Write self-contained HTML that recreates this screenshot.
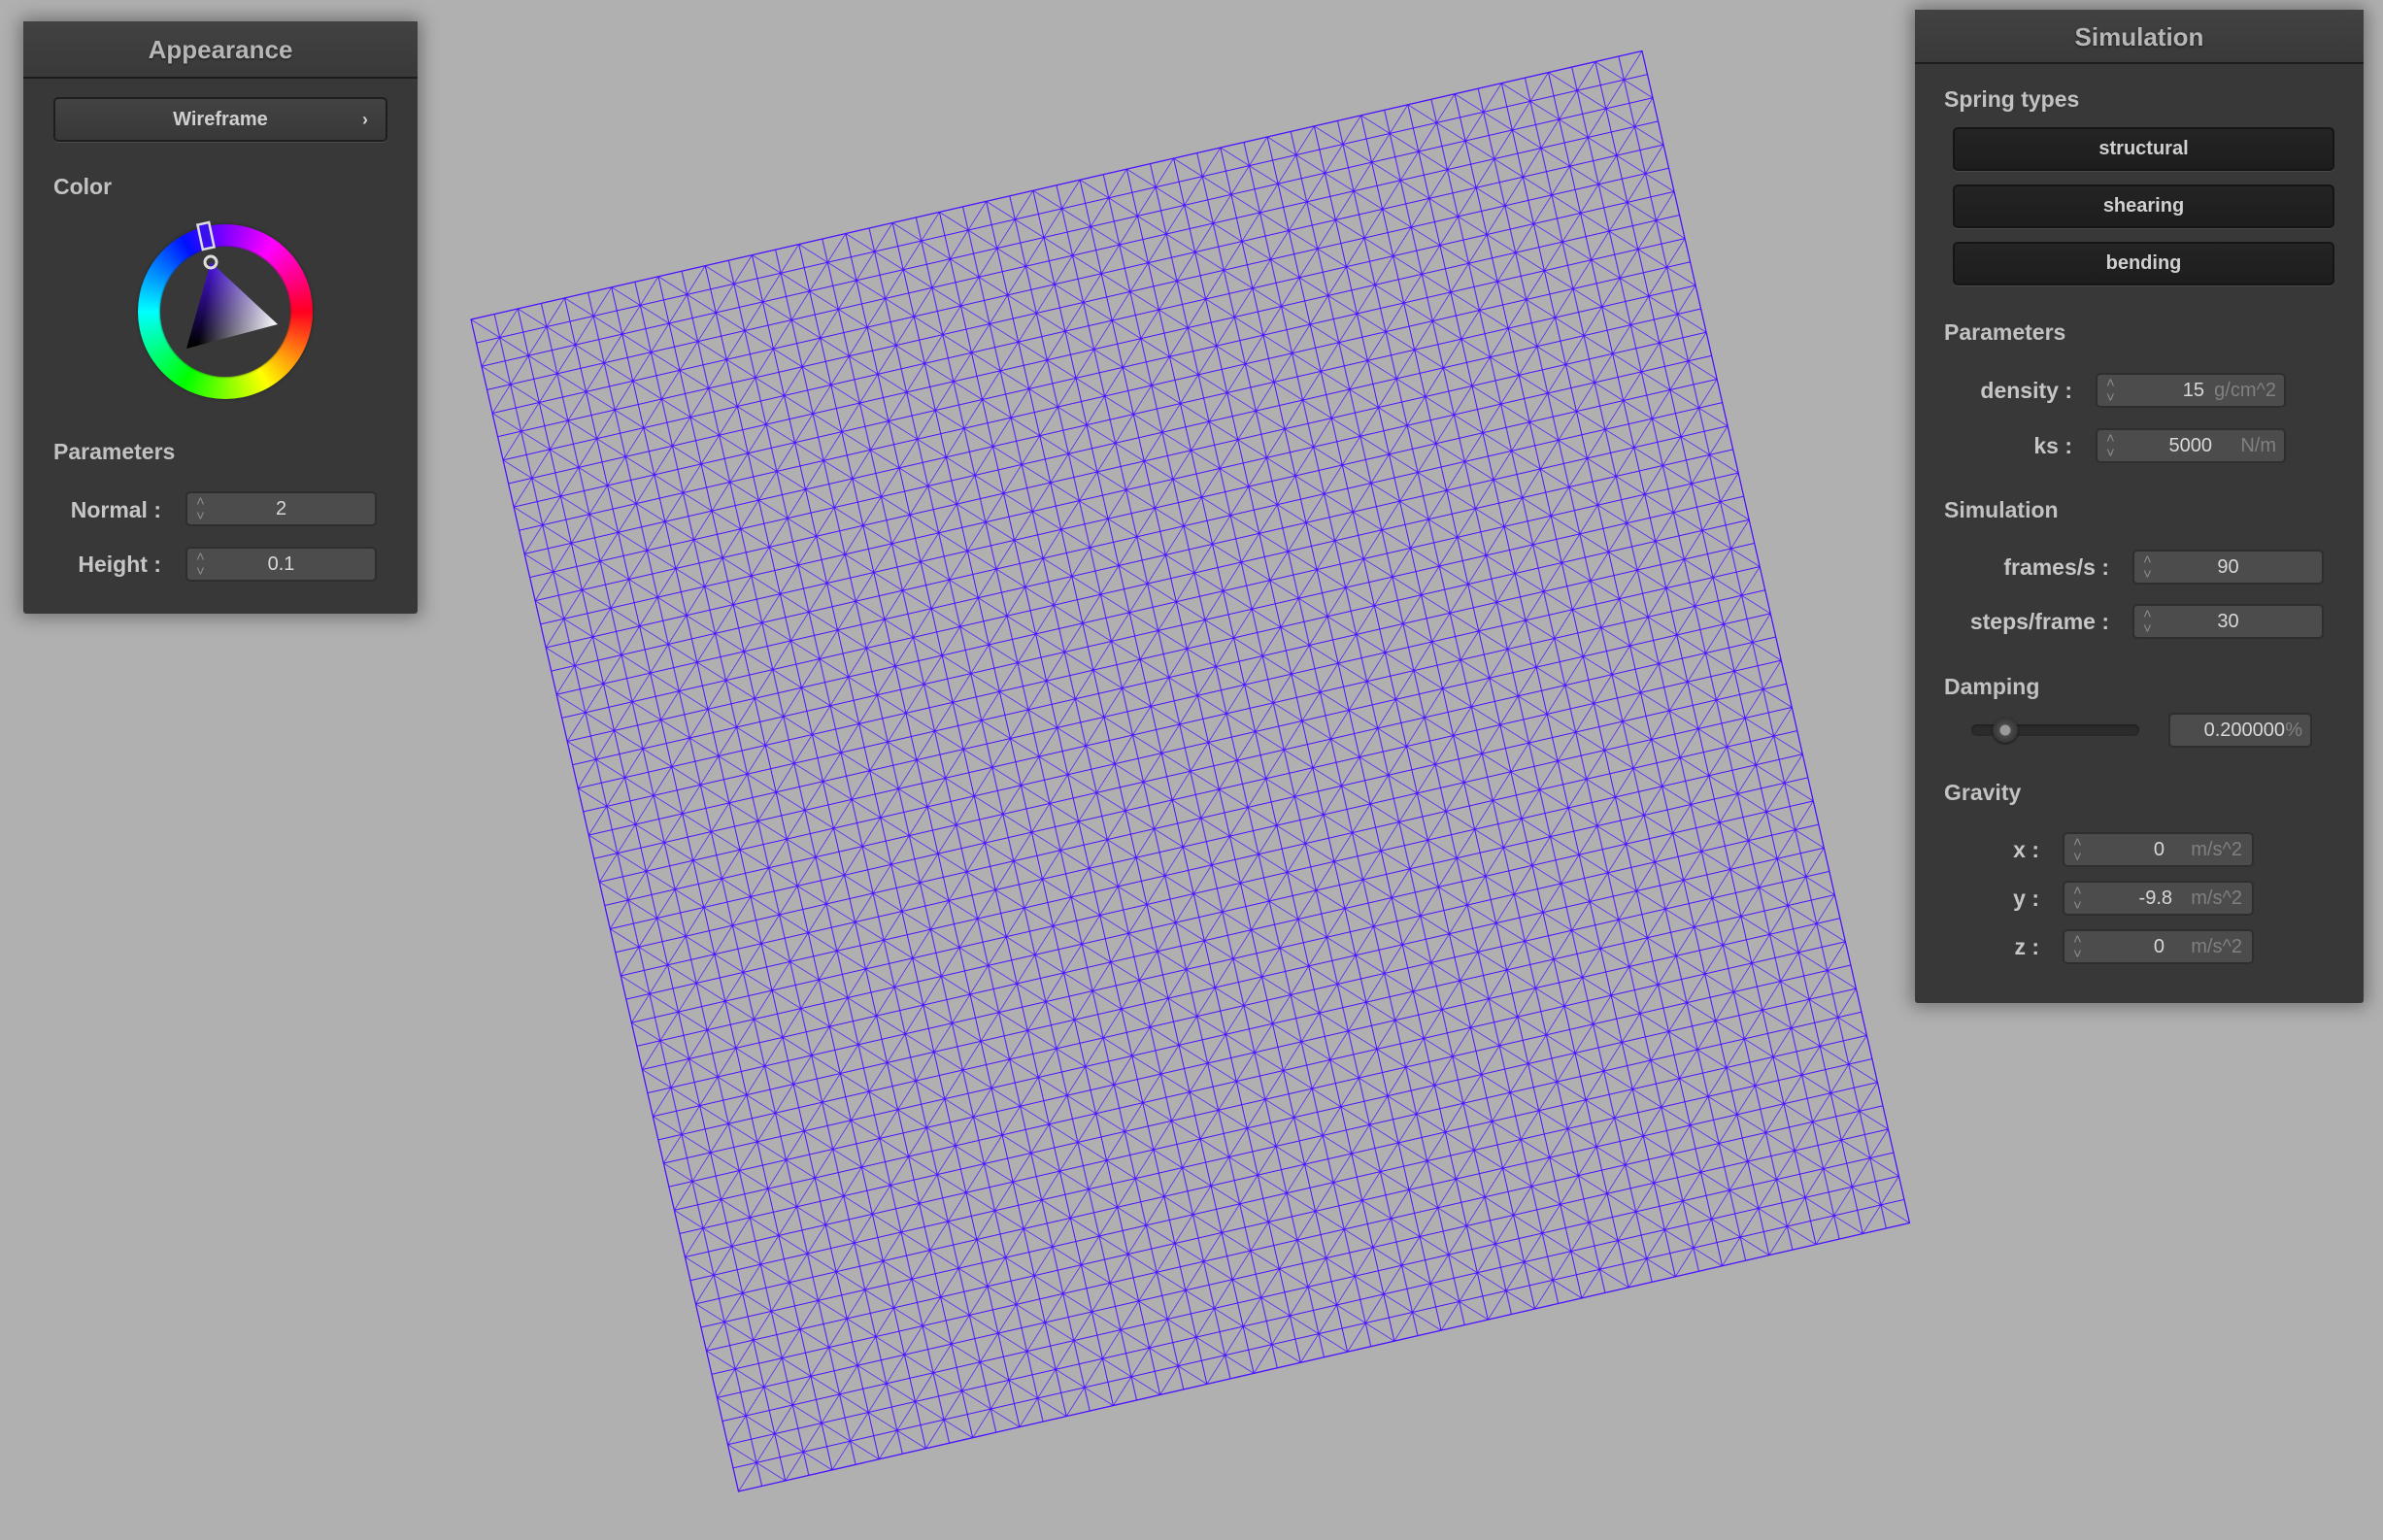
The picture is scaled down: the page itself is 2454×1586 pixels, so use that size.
<!DOCTYPE html>
<html><head><meta charset="utf-8"><style>
*{box-sizing:border-box;margin:0;padding:0}
body{width:2454px;height:1586px;background:#b0b0b0;position:relative;overflow:hidden;font-family:"Liberation Sans",Arial,sans-serif}
.panel{position:absolute;background:#383838;border-radius:3px;box-shadow:0 0 18px 4px rgba(0,0,0,.35)}
.hdr{position:absolute;left:0;right:0;top:0;background:linear-gradient(#424242,#393939);border-bottom:2px solid #1c1c1c;text-align:center;color:#b6b6b6;font-weight:bold;font-size:26px;text-shadow:0 1px 2px rgba(0,0,0,.6)}
.abs{position:absolute}
.sec{position:absolute;color:#c2c2c2;font-weight:bold;font-size:23px}
.lbl{position:absolute;color:#c6c6c6;font-weight:bold;font-size:23px;text-align:right}
.fld{position:absolute;height:36px;background:#4c4c4c;border:2px solid #2e2e2e;border-radius:5px;color:#d8d8d8;font-size:20px;line-height:32px}
.fld .sp{position:absolute;left:9px;top:1px;color:#8a8a8a;font-size:15px;line-height:15px}
.fld .v{position:absolute;text-align:right}
.fld .u{position:absolute;color:#808080}
.btn{position:absolute;background:linear-gradient(#242424,#1d1d1d);border:2px solid #151515;border-radius:5px;color:#d0d0d0;font-weight:bold;font-size:20px;text-align:center;box-shadow:0 1px 0 #4a4a4a}
</style></head><body>

<svg class="abs" style="left:0;top:0" width="2454" height="1586">
<defs>
<pattern id="pt" patternUnits="userSpaceOnUse" x="0" y="0" width="2" height="2">
<g stroke="#4a10ff" stroke-width="0.04" fill="none">
<line x1="0" y1="0" x2="2" y2="0"/><line x1="0" y1="1" x2="2" y2="1"/><line x1="0" y1="2" x2="2" y2="2"/>
<line x1="0" y1="0" x2="0" y2="2"/><line x1="1" y1="0" x2="1" y2="2"/><line x1="2" y1="0" x2="2" y2="2"/>
<line x1="0" y1="0" x2="2" y2="2" stroke-width="0.03"/><line x1="2" y1="0" x2="0" y2="2" stroke-width="0.03"/>
</g></pattern>
</defs>
<g transform="matrix(24.12 -5.53 5.51 24.14 485 329)">
<rect x="0" y="0" width="50" height="50" fill="url(#pt)"/>
<rect x="0" y="0" width="50" height="50" fill="none" stroke="#4a10ff" stroke-width="0.05"/>
</g>
</svg>

<div class="panel" style="left:24px;top:22px;width:406px;height:610px">
<div class="hdr" style="height:59px;line-height:58px">Appearance</div>
<div class="btn" style="left:31px;top:78px;width:344px;height:46px;line-height:42px;background:linear-gradient(#434343,#383838);border-color:#1e1e1e">Wireframe<span style="position:absolute;right:18px;font-size:18px">›</span></div>
<div class="sec" style="left:31px;top:157px">Color</div>
<div class="sec" style="left:31px;top:430px">Parameters</div>
<div class="lbl" style="left:0;width:142px;top:490px">Normal :</div>
<div class="fld" style="left:167px;top:484px;width:197px"><div class="sp">˄<br>˅</div><div class="v" style="left:0;width:100%;text-align:center">2</div></div>
<div class="lbl" style="left:0;width:142px;top:546px">Height :</div>
<div class="fld" style="left:167px;top:541px;width:197px"><div class="sp">˄<br>˅</div><div class="v" style="left:0;width:100%;text-align:center">0.1</div></div>
</div>

<div class="abs" style="left:142px;top:231px;width:180px;height:180px;border-radius:50%;background:conic-gradient(#8000ff 0deg,#ff00ff 35deg,#ff0020 90deg,#ffff00 150deg,#00ff00 210deg,#00ffff 270deg,#0010ff 330deg,#8000ff 360deg);box-shadow:0 0 3px #222"></div>
<div class="abs" style="left:165px;top:254px;width:134px;height:134px;border-radius:50%;background:#383838;box-shadow:0 0 2px #222"></div>
<svg class="abs" style="left:0;top:0" width="440" height="440">
<defs>
<linearGradient id="g1" gradientUnits="userSpaceOnUse" x1="217" y1="270" x2="215" y2="355"><stop offset="0" stop-color="#4a14e0"/><stop offset="1" stop-color="#000"/></linearGradient>
<linearGradient id="g2" gradientUnits="userSpaceOnUse" x1="210" y1="320" x2="286" y2="334"><stop offset="0" stop-color="#fff" stop-opacity="0"/><stop offset="1" stop-color="#fff" stop-opacity="1"/></linearGradient>
</defs>
<polygon points="217,270 286,334 192,359" fill="url(#g1)"/>
<polygon points="217,270 286,334 192,359" fill="url(#g2)"/>
<circle cx="217" cy="270" r="6" fill="none" stroke="#ddd" stroke-width="3"/>
<rect x="206" y="230" width="12" height="26" transform="rotate(-12 212 243)" fill="#3a10ee" stroke="#ddd" stroke-width="2.5"/>
</svg>

<div class="panel" style="left:1972px;top:10px;width:462px;height:1023px">
<div class="hdr" style="height:56px;line-height:56px">Simulation</div>
<div class="sec" style="left:30px;top:79px">Spring types</div>
<div class="btn" style="left:39px;top:121px;width:393px;height:45px;line-height:41px">structural</div>
<div class="btn" style="left:39px;top:180px;width:393px;height:45px;line-height:41px">shearing</div>
<div class="btn" style="left:39px;top:239px;width:393px;height:45px;line-height:41px">bending</div>
<div class="sec" style="left:30px;top:319px">Parameters</div>
<div class="lbl" style="left:0;width:162px;top:379px">density :</div>
<div class="fld" style="left:186px;top:374px;width:196px"><div class="sp">˄<br>˅</div><div class="v" style="right:82px">15</div><div class="u" style="right:8px">g/cm^2</div></div>
<div class="lbl" style="left:0;width:162px;top:436px">ks :</div>
<div class="fld" style="left:186px;top:431px;width:196px"><div class="sp">˄<br>˅</div><div class="v" style="right:74px">5000</div><div class="u" style="right:8px">N/m</div></div>
<div class="sec" style="left:30px;top:502px">Simulation</div>
<div class="lbl" style="left:0;width:200px;top:561px">frames/s :</div>
<div class="fld" style="left:224px;top:556px;width:197px"><div class="sp">˄<br>˅</div><div class="v" style="left:0;width:100%;text-align:center">90</div></div>
<div class="lbl" style="left:0;width:200px;top:617px">steps/frame :</div>
<div class="fld" style="left:224px;top:612px;width:197px"><div class="sp">˄<br>˅</div><div class="v" style="left:0;width:100%;text-align:center">30</div></div>
<div class="sec" style="left:30px;top:684px">Damping</div>
<div class="abs" style="left:58px;top:736px;width:173px;height:12px;border-radius:6px;background:#2b2b2b;box-shadow:inset 0 1px 2px #1a1a1a"></div>
<div class="abs" style="left:80px;top:729px;width:26px;height:26px;border-radius:50%;background:radial-gradient(circle,#9a9a9a 0,#9a9a9a 5px,#4a4a4a 6px,#353535 13px);box-shadow:0 1px 2px #111"></div>
<div class="fld" style="left:261px;top:724px;width:148px"><div class="v" style="right:26px">0.200000</div><div class="u" style="right:8px">%</div></div>
<div class="sec" style="left:30px;top:793px">Gravity</div>
<div class="lbl" style="left:0;width:128px;top:852px">x :</div>
<div class="fld" style="left:152px;top:847px;width:197px"><div class="sp">˄<br>˅</div><div class="v" style="right:90px">0</div><div class="u" style="right:10px">m/s^2</div></div>
<div class="lbl" style="left:0;width:128px;top:902px">y :</div>
<div class="fld" style="left:152px;top:897px;width:197px"><div class="sp">˄<br>˅</div><div class="v" style="right:82px">-9.8</div><div class="u" style="right:10px">m/s^2</div></div>
<div class="lbl" style="left:0;width:128px;top:952px">z :</div>
<div class="fld" style="left:152px;top:947px;width:197px"><div class="sp">˄<br>˅</div><div class="v" style="right:90px">0</div><div class="u" style="right:10px">m/s^2</div></div>
</div>
</body></html>
